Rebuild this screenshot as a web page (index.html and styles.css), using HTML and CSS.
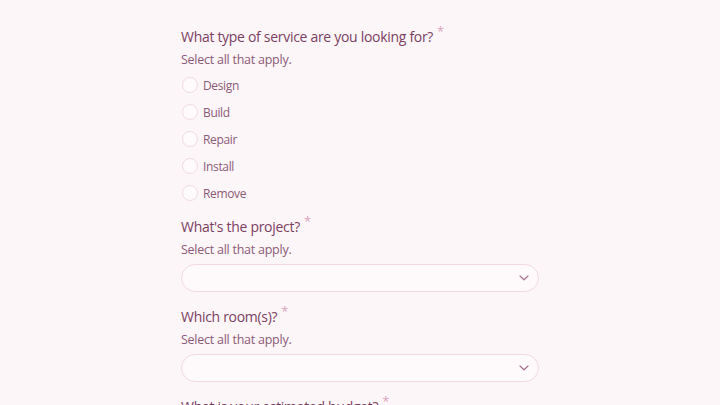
FILE: index.html
```html
<!DOCTYPE html>
<html>
<head>
<meta charset="utf-8">
<link rel="stylesheet" href="styles.css">
</head>
<body>
<main class="form">
  <section class="question q-first">
    <h2 class="q-title">What type of service are you looking for?<span class="req">*</span></h2>
    <p class="q-hint">Select all that apply.</p>
    <ul class="options">
      <li class="option"><span class="radio"></span><span class="opt-label">Design</span></li>
      <li class="option"><span class="radio"></span><span class="opt-label">Build</span></li>
      <li class="option"><span class="radio"></span><span class="opt-label">Repair</span></li>
      <li class="option"><span class="radio"></span><span class="opt-label">Install</span></li>
      <li class="option"><span class="radio"></span><span class="opt-label">Remove</span></li>
    </ul>
  </section>
  <section class="question">
    <h2 class="q-title">What's the project?<span class="req">*</span></h2>
    <p class="q-hint">Select all that apply.</p>
    <div class="select"><svg class="chev" width="12" height="8" viewBox="0 0 12 8"><path d="M2 2 L6 5.8 L10 2" fill="none" stroke="#a9718f" stroke-width="1.2" stroke-linecap="round" stroke-linejoin="round"/></svg></div>
  </section>
  <section class="question">
    <h2 class="q-title">Which room(s)?<span class="req">*</span></h2>
    <p class="q-hint">Select all that apply.</p>
    <div class="select"><svg class="chev" width="12" height="8" viewBox="0 0 12 8"><path d="M2 2 L6 5.8 L10 2" fill="none" stroke="#a9718f" stroke-width="1.2" stroke-linecap="round" stroke-linejoin="round"/></svg></div>
  </section>
  <section class="question">
    <h2 class="q-title">What is your estimated budget?<span class="req">*</span></h2>
  </section>
</main>
</body>
</html>
```
FILE: styles.css
```css
html, body {
  margin: 0;
  padding: 0;
  background: #fdf6f9;
  height: 100%;
  overflow: hidden;
}
body {
  font-family: "Open Sans", "DejaVu Sans", sans-serif;
}
.form {
  width: 358px;
  margin: 0 0 0 181px;
  padding-top: 26px;
  display: flex;
  flex-direction: column;
  gap: 14px;
}
.question {
  display: flex;
  flex-direction: column;
}
.q-title {
  margin: 0;
  font-size: 14px;
  font-weight: 500;
  line-height: 22px;
  color: #7b3f61;
  letter-spacing: -0.3px;
}
.req {
  color: #dca4bc;
  font-size: 13px;
  font-weight: 400;
  margin-left: 4px;
  position: relative;
  top: -6px;
}
.q-hint {
  margin: 3px 0 0;
  font-size: 12.5px;
  line-height: 18px;
  color: #8b5a76;
  letter-spacing: -0.25px;
}
.options {
  list-style: none;
  margin: 7px 0 0;
  padding: 0;
  display: flex;
  flex-direction: column;
  gap: 9px;
}
.option {
  display: flex;
  align-items: center;
  height: 18px;
  gap: 5px;
}
.radio {
  width: 14px;
  height: 14px;
  border: 1px solid #f1dbe5;
  border-radius: 50%;
  background: #fffafc;
  margin-left: 1px;
}
.opt-label {
  font-size: 12px;
  color: #8b5a76;
  letter-spacing: -0.35px;
}
.select {
  margin-top: 5px;
  height: 26px;
  border: 1px solid #f0d9e3;
  border-radius: 14px;
  background: #fefafc;
  display: flex;
  align-items: center;
  justify-content: flex-end;
  padding-right: 8px;
}
```
